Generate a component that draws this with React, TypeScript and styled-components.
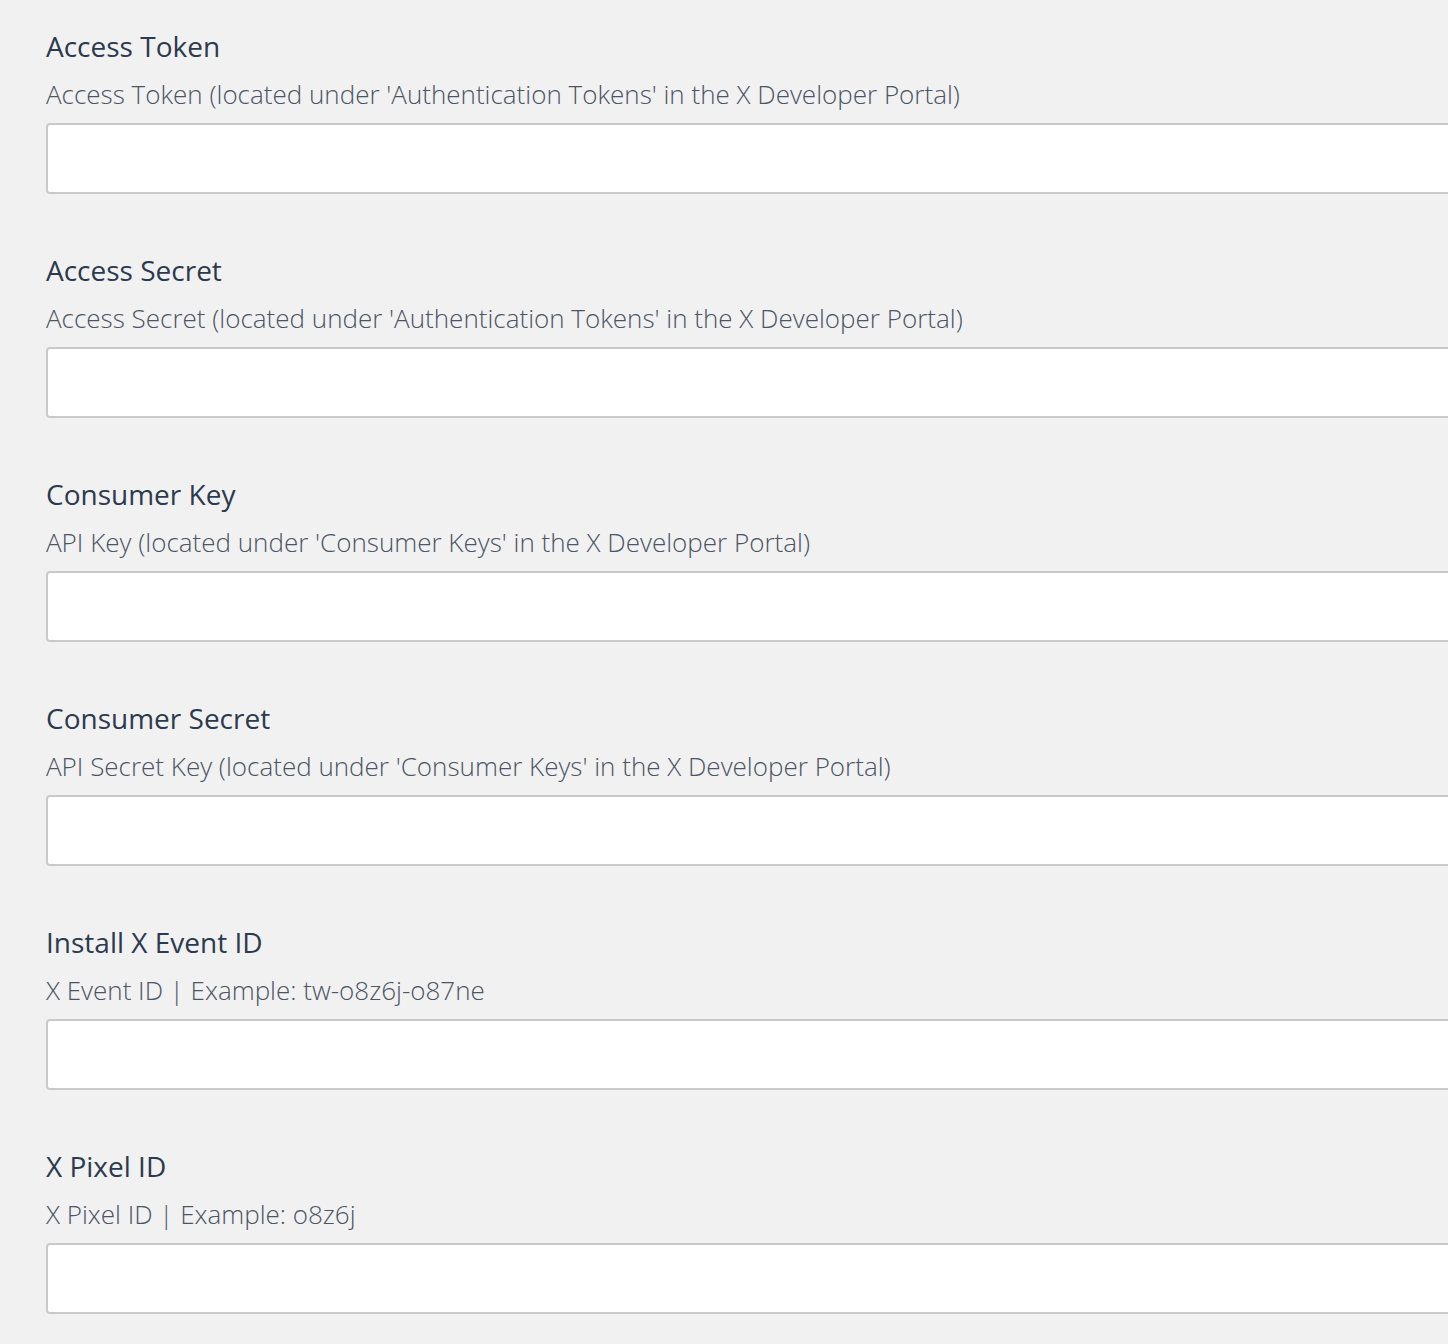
import React from "react";
import styled, { createGlobalStyle } from "styled-components";

const GlobalStyle = createGlobalStyle`
  html, body {
    margin: 0;
    padding: 0;
    background: #f1f1f1;
    overflow: hidden;
  }
  body {
    font-family: "Open Sans", "Noto Sans", sans-serif;
  }
`;

const Page = styled.div`
  display: flex;
  flex-direction: column;
  gap: 56px;
  padding: 26px 0 40px 46px;
  width: 1402px;
  overflow: hidden;
`;

const Field = styled.div`
  display: flex;
  flex-direction: column;
`;

const Title = styled.label`
  font-size: 28px;
  line-height: 40px;
  font-weight: 400;
  color: #2c3a4f;
  margin-bottom: 10px;
`;

const Description = styled.div`
  font-size: 26px;
  line-height: 36px;
  font-weight: 300;
  color: #4a5566;
  margin-bottom: 11px;
`;

const Input = styled.input`
  box-sizing: border-box;
  width: 1480px;
  height: 71px;
  background: #ffffff;
  border: 2px solid #c9c9c9;
  border-radius: 4px;
  padding: 0 16px;
  font-family: inherit;
  font-size: 25px;
  outline: none;
`;

const fields = [
  {
    title: "Access Token",
    desc: "Access Token (located under 'Authentication Tokens' in the X Developer Portal)",
  },
  {
    title: "Access Secret",
    desc: "Access Secret (located under 'Authentication Tokens' in the X Developer Portal)",
  },
  {
    title: "Consumer Key",
    desc: "API Key (located under 'Consumer Keys' in the X Developer Portal)",
  },
  {
    title: "Consumer Secret",
    desc: "API Secret Key (located under 'Consumer Keys' in the X Developer Portal)",
  },
  {
    title: "Install X Event ID",
    desc: "X Event ID | Example: tw-o8z6j-o87ne",
  },
  {
    title: "X Pixel ID",
    desc: "X Pixel ID | Example: o8z6j",
  },
];

export default function App() {
  return (
    <>
      <GlobalStyle />
      <Page>
        {fields.map((f) => (
          <Field key={f.title}>
            <Title>{f.title}</Title>
            <Description>{f.desc}</Description>
            <Input type="text" />
          </Field>
        ))}
      </Page>
    </>
  );
}
